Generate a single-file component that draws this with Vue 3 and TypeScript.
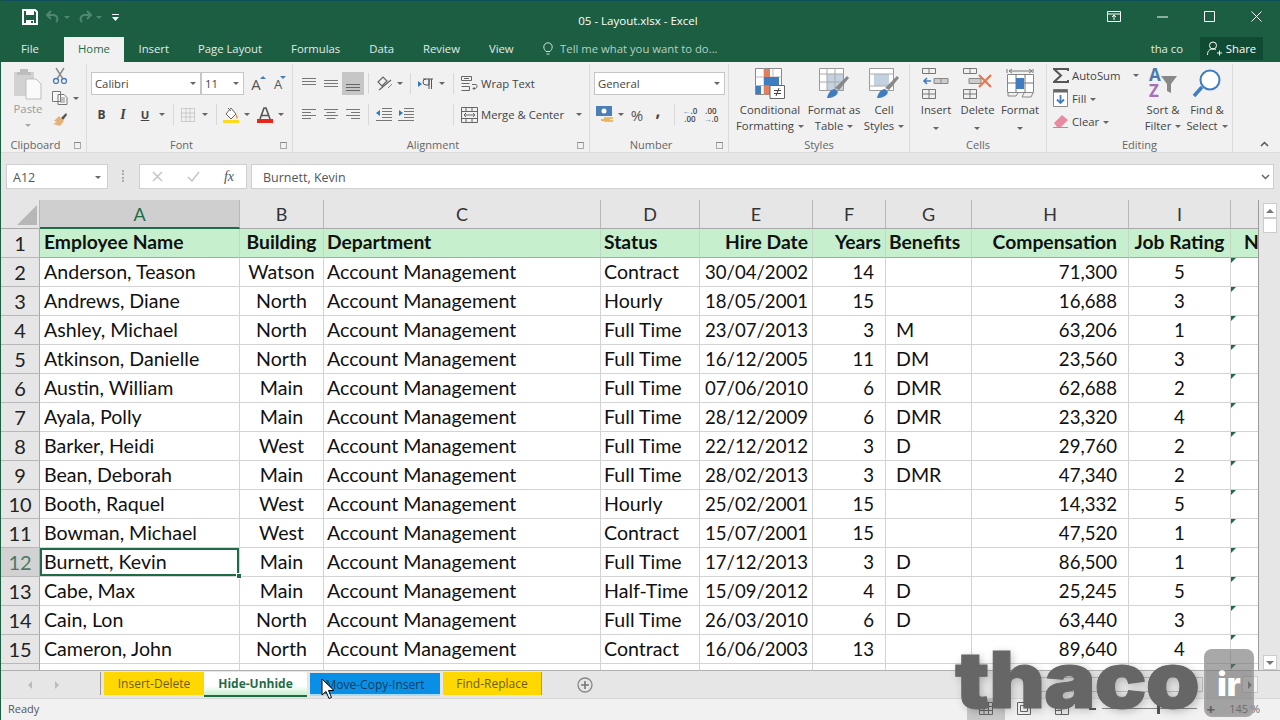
<script setup lang="ts">
// Sheet data, one array per row
type Row = [string, string, string, string, string, string, string, string, string]

const columns = ['A', 'B', 'C', 'D', 'E', 'F', 'G', 'H', 'I', '']
const heads = ['Employee Name', 'Building', 'Department', 'Status', 'Hire Date', 'Years', 'Benefits', 'Compensation', 'Job Rating']
const aligns = ['first', 'center', 'left', 'left', 'right num', 'indent num', 'pad', 'indent num', 'center num']
const headAligns = ['first', 'center', 'left', 'left', 'right', 'right', 'left', 'indent', 'center']

const rows: Row[] = [
  ['Anderson, Teason', 'Watson', 'Account Management', 'Contract', '30/04/2002', '14', '', '71,300', '5'],
  ['Andrews, Diane', 'North', 'Account Management', 'Hourly', '18/05/2001', '15', '', '16,688', '3'],
  ['Ashley, Michael', 'North', 'Account Management', 'Full Time', '23/07/2013', '3', 'M', '63,206', '1'],
  ['Atkinson, Danielle', 'North', 'Account Management', 'Full Time', '16/12/2005', '11', 'DM', '23,560', '3'],
  ['Austin, William', 'Main', 'Account Management', 'Full Time', '07/06/2010', '6', 'DMR', '62,688', '2'],
  ['Ayala, Polly', 'Main', 'Account Management', 'Full Time', '28/12/2009', '6', 'DMR', '23,320', '4'],
  ['Barker, Heidi', 'West', 'Account Management', 'Full Time', '22/12/2012', '3', 'D', '29,760', '2'],
  ['Bean, Deborah', 'Main', 'Account Management', 'Full Time', '28/02/2013', '3', 'DMR', '47,340', '2'],
  ['Booth, Raquel', 'West', 'Account Management', 'Hourly', '25/02/2001', '15', '', '14,332', '5'],
  ['Bowman, Michael', 'West', 'Account Management', 'Contract', '15/07/2001', '15', '', '47,520', '1'],
  ['Burnett, Kevin', 'Main', 'Account Management', 'Full Time', '17/12/2013', '3', 'D', '86,500', '1'],
  ['Cabe, Max', 'Main', 'Account Management', 'Half-Time', '15/09/2012', '4', 'D', '25,245', '5'],
  ['Cain, Lon', 'North', 'Account Management', 'Full Time', '26/03/2010', '6', 'D', '63,440', '3'],
  ['Cameron, John', 'North', 'Account Management', 'Contract', '16/06/2003', '13', '', '89,640', '4'],
]
const menus = ['Insert', 'Page Layout', 'Formulas', 'Data', 'Review', 'View']
</script>

<template>
  <div class="app">
    <!-- Title bar -->
    <header class="title">
      <div class="qat">
        <svg width="16" height="16" viewBox="0 0 16 16"><path d="M1 1h12l2 2v12H1z" fill="none" stroke="#fff" stroke-width="2"/><path d="M4 1h8v5H4zM4 11h8v4H4z" fill="#fff"/><path d="M9 12h2v2H9z" fill="#1b5e42"/></svg>
        <svg class="undo" width="16" height="14" viewBox="0 0 16 14"><path d="M6 1 2 5l4 4M2 5h7a4 4 0 0 1 2 7" fill="none" stroke="#4f8770" stroke-width="2"/></svg>
        <i class="mini" />
        <svg class="undo" width="16" height="14" viewBox="0 0 16 14"><path d="m10 1 4 4-4 4m4-4H7a4 4 0 0 0-2 7" fill="none" stroke="#4f8770" stroke-width="2"/></svg>
        <i class="mini" />
        <svg class="more" width="7" height="7" viewBox="0 0 7 7"><path d="M0 0h7v1H0zM0 3h7L3.500 7z" fill="#fff"/></svg>
      </div>
      <div class="doc">05 - Layout.xlsx - Excel</div>
      <div class="win">
        <svg width="14" height="11" viewBox="0 0 14 11"><path d="M.5.500h13v10H.5zM.5 3h13M7 9V4.500M5 6l2-2 2 2" fill="none" stroke="#fff"/></svg>
        <svg width="11" height="11" viewBox="0 0 11 11"><path d="M0 6h11" stroke="#fff"/></svg>
        <svg width="11" height="11" viewBox="0 0 11 11"><path d="M.5.500h10v10H.5z" fill="none" stroke="#fff"/></svg>
        <svg width="11" height="11" viewBox="0 0 11 11"><path d="m.5.500 10 10m0-10-10 10" fill="none" stroke="#fff"/></svg>
      </div>
    </header>

    <!-- Menu tabs -->
    <nav class="menu">
      <span class="file">File</span>
      <span class="home">Home</span>
      <span v-for="m in menus" :key="m" class="m">{{ m }}</span>
      <svg class="bulb" width="10" height="14" viewBox="0 0 10 14"><path d="M3 9.500C2 8 .8 7 .8 5a4.200 4.200 0 0 1 8.400 0c0 2-1.200 3-2.200 4.500zM3.500 12h3" fill="none" stroke="#cfe0d8"/></svg>
      <span class="tell">Tell me what you want to do...</span>
      <span class="user">tha co</span>
      <span class="share">
        <svg width="15" height="15" viewBox="0 0 15 15"><circle cx="6" cy="4.500" r="3.500" fill="none" stroke="#fff"/><path d="M.5 14c0-4 2-6 5.500-6 1 0 2 .2 2.800.7M10 12h5M12.500 9.500v5" fill="none" stroke="#fff"/></svg>
        Share
      </span>
    </nav>

    <!-- Ribbon -->
    <section class="ribbon">
      <div class="group g-clip">
        <div class="body clip">
          <div class="paste">
            <svg width="30" height="33" viewBox="0 0 30 33"><path d="M1 5h20v24H1z" fill="#d2d2d2"/><path d="M7 5V2h8v3h3v3H4V5z" fill="#bdbdbd"/><path d="M13 12h10l5 5v15H13z" fill="#fafafa" stroke="#bdbdbd"/></svg>
            <span>Paste</span>
            <i class="caret faint" />
          </div>
          <div class="clip-tools">
            <svg width="16" height="17" viewBox="0 0 16 17"><path d="m4 1 7 11m1-11L5 12" stroke="#8b8b8b" stroke-width="1.400" fill="none"/><circle cx="4" cy="14" r="2.500" fill="none" stroke="#4a7ab0" stroke-width="1.300"/><circle cx="12" cy="14" r="2.500" fill="none" stroke="#4a7ab0" stroke-width="1.300"/></svg>
            <div class="row-t">
              <svg width="16" height="14" viewBox="0 0 16 14"><path d="M.5.500h8v10h-8zM6 3.500h6l3 3v7H6z" fill="#f8f8f8" stroke="#777"/><path d="M8 7h5M8 9h5M8 11h5" stroke="#888"/></svg>
              <i class="caret" />
            </div>
            <svg width="16" height="15" viewBox="0 0 16 15"><path d="m9 6 5-5 1 2-4 5z" fill="#555"/><path d="M7 4 12 9 8 14 1 12l4-2-3-1z" fill="#e7b27a"/></svg>
          </div>
        </div>
        <div class="label launched">Clipboard<i class="launch" /></div>
      </div>

      <div class="group g-font">
        <div class="body">
          <div class="bar">
            <div class="combo c-font"><span>Calibri</span><i class="caret" /></div>
            <div class="combo c-size"><span>11</span><i class="caret" /></div>
            <span class="t w24 grow-a">A<b class="up" /></span>
            <span class="t w20 shrink-a">A<b class="dn" /></span>
          </div>
          <div class="bar low">
            <span class="t w21 bold">B</span>
            <span class="t w22 ital">I</span>
            <span class="t w22 under">U</span>
            <span class="t w12"><i class="caret" /></span>
            <span class="t w10"><i class="sep" /></span>
            <span class="t w20"><svg width="14" height="14" viewBox="0 0 14 14"><path d="M.5.500h13v13H.5zM5 .5v13M9 .5v13M.5 5h13M.5 9h13" fill="none" stroke="#aaa" stroke-dasharray="1 1"/></svg></span>
            <span class="t w13"><i class="caret" /></span>
            <span class="t w10"><i class="sep" /></span>
            <span class="t w20"><svg width="16" height="16" viewBox="0 0 16 16"><path d="M8 1 3 7l5 5 5-5zM5 1l3 3" fill="#fff" stroke="#666"/><path d="M13 7c2 2 2 4 1 5-1-1-1-3-1-5z" fill="#e08a3c"/><path d="M0 13h16v3H0z" fill="#fcdb1e"/></svg></span>
            <span class="t w12"><i class="caret" /></span>
            <span class="t w2" />
            <span class="t w20"><svg width="16" height="16" viewBox="0 0 16 16"><path d="m3 12 4-11h2l4 11M4.500 8.500h7" fill="none" stroke="#555" stroke-width="1.600"/><path d="M0 12h16v4H0z" fill="#e8261a"/></svg></span>
            <span class="t w12"><i class="caret" /></span>
          </div>
        </div>
        <div class="label launched">Font<i class="launch" /></div>
      </div>

      <div class="group g-align">
        <div class="body">
          <div class="bar">
            <span class="t w22"><svg width="14" height="18" viewBox="0 0 14 18"><path d="M0 3.500h14M0 6.500h14M0 9.500h14" stroke="#777"/></svg></span>
            <span class="t w22"><svg width="14" height="18" viewBox="0 0 14 18"><path d="M0 5.500h14M0 8.500h14M0 11.500h14" stroke="#777"/></svg></span>
            <span class="t w22 on"><svg width="14" height="18" viewBox="0 0 14 18"><path d="M0 9.500h14M0 12.500h14M0 15.500h14" stroke="#666"/></svg></span>
            <span class="t w8"><i class="sep" /></span>
            <span class="t w24"><svg width="17" height="17" viewBox="0 0 17 17"><path d="m2 7 5-5 4 4-5 5zM3 15 15 5" fill="none" stroke="#666" stroke-width="1.200"/><path d="m12 13 4-4" stroke="#888"/></svg></span>
            <span class="t w8"><i class="caret" /></span>
            <span class="t w12"><i class="sep" /></span>
            <span class="t w20"><svg width="16" height="12" viewBox="0 0 16 12"><path d="M0 3l4 3-4 3z" fill="#2c7bc0"/><path d="M5 1h10M8 1a3 3 0 0 0 0 6h3V1M11 1v10M13.500 1v10" fill="none" stroke="#555"/></svg></span>
            <span class="t w12"><i class="caret" /></span>
            <span class="t w10"><i class="sep" /></span>
            <div class="textbtn">
              <svg width="17" height="17" viewBox="0 0 17 17"><path d="M.5 1.500h10v4H.5zM.5 8.500h8M.5 11.500h8M.5 15.500h8v-4M3 3.500h5M11 9.500h4c1.500 0 1.500 4-1 4h-2m1.500-1.500L12 13.500l1.500 1.500" fill="none" stroke="#666"/></svg>
              <span>Wrap Text</span>
            </div>
          </div>
          <div class="bar low">
            <span class="t w22"><svg width="14" height="12" viewBox="0 0 14 12"><path d="M0 .500h14M0 3.500h9M0 6.500h14M0 9.500h9" stroke="#777"/></svg></span>
            <span class="t w22"><svg width="14" height="12" viewBox="0 0 14 12"><path d="M0 .500h14M2.500 3.500h9M0 6.500h14M2.500 9.500h9" stroke="#777"/></svg></span>
            <span class="t w22"><svg width="14" height="12" viewBox="0 0 14 12"><path d="M0 .500h14M5 3.500h9M0 6.500h14M5 9.500h9" stroke="#777"/></svg></span>
            <span class="t w8"><i class="sep" /></span>
            <span class="t w24"><svg width="16" height="13" viewBox="0 0 16 13"><path d="M6 .500h10M6 3.500h10M6 6.500h10M6 9.500h10M0 12.500h16" stroke="#777"/><path d="M0 5l4-3v6z" fill="#2c7bc0"/></svg></span>
            <span class="t w20"><svg width="16" height="13" viewBox="0 0 16 13"><path d="M6 .500h10M6 3.500h10M6 6.500h10M6 9.500h10M0 12.500h16" stroke="#777"/><path d="M5 5 1 2v6z" fill="#2c7bc0"/></svg></span>
            <span class="t w32" />
            <span class="t w10"><i class="sep" /></span>
            <div class="textbtn">
              <svg width="17" height="16" viewBox="0 0 17 16"><path d="M.5.500h16v15H.5zM.5 4.500h16M.5 11.500h16M5 .5v4M11 .5v4M5 11.500v4M11 11.500v4M3 8h11M5 6 3 8l2 2m7-4 2 2-2 2" fill="none" stroke="#666"/></svg>
              <span>Merge &amp; Center</span>
              <i class="caret merge" />
            </div>
          </div>
        </div>
        <div class="label launched">Alignment<i class="launch" /></div>
      </div>

      <div class="group g-num">
        <div class="body">
          <div class="bar">
            <div class="combo c-num"><span>General</span><i class="caret" /></div>
          </div>
          <div class="bar low">
            <span class="t w22"><svg width="18" height="18" viewBox="0 0 18 18"><path d="M0 0h16v10H0z" fill="#4c7fb5"/><circle cx="8" cy="5" r="2.500" fill="#fff"/><path d="M8 11h9v2H8zM8 14h9v2H8z" fill="#eebd6c"/><path d="M5 13h9v2H5z" fill="#e7b35c"/></svg></span>
            <span class="t w10"><i class="caret" /></span>
            <span class="t w22 pct">%</span>
            <span class="t w20 comma">,</span>
            <span class="t w12"><i class="sep" /></span>
            <span class="t w20 dec"><b><em>←</em>.0</b><b>.00</b></span>
            <span class="t w22 dec"><b>.00</b><b><em>→</em>.0</b></span>
          </div>
        </div>
        <div class="label launched">Number<i class="launch" /></div>
      </div>

      <div class="group g-styles">
        <div class="body large">
          <div class="big w74">
            <svg width="30" height="31" viewBox="0 0 30 31"><path d="M.5.500h26v26H.5z" fill="#fff" stroke="#888"/><path d="M.5 9h26M.5 17.500h26M9 .5v26M18 .5v26" stroke="#bbb"/><path d="M9 1h6v8H9zM9 17.500h6v9H9z" fill="#e08060"/><path d="M9 9h15v8.500H9zM1 18h5v8H1z" fill="#3f7cc0"/><path d="M15 17.500h14.500v13H15z" fill="#fff" stroke="#666"/><path d="M19 22.500h7M19 25.500h7M24 20l-3 8" stroke="#444"/></svg>
            <span>Conditional<br>Formatting<i class="caret inl" /></span>
          </div>
          <div class="big w54">
            <svg width="30" height="31" viewBox="0 0 30 31"><path d="M.5.500h24v22H.5z" fill="#fff" stroke="#999"/><path d="M8 6h16v16H8z" fill="#c3d1e0"/><path d="M.5 6h24M.5 14h24M8 .5v22M16 .5v22" stroke="#aaa"/><path d="m16 20 12-12 2 2-10 12z" fill="#888"/><path d="M8 30c1-5 4-9 8-9l3 3c-1 4-6 6-11 6z" fill="#3f7cc0"/></svg>
            <span>Format as<br>Table<i class="caret inl" /></span>
          </div>
          <div class="big w46">
            <svg width="30" height="31" viewBox="0 0 30 31"><path d="M.5.500h24v22H.5z" fill="#fff" stroke="#999"/><path d="M5 6h15v12H5z" fill="#c3d1e0"/><path d="M.5 6h24M.5 18h24" stroke="#aaa"/><path d="m16 20 12-12 2 2-10 12z" fill="#888"/><path d="M8 30c1-5 4-9 8-9l3 3c-1 4-6 6-11 6z" fill="#3f7cc0"/></svg>
            <span>Cell<br>Styles<i class="caret inl" /></span>
          </div>
        </div>
        <div class="label">Styles</div>
      </div>

      <div class="group g-cells">
        <div class="body large">
          <div class="big w44">
            <svg width="30" height="31" viewBox="0 0 30 31"><path d="M1.500.500h13v5h-13zM8 .5v5M1.500 21.500h13v9h-13zM1.500 26h13M8 21.500v9" fill="none" stroke="#777"/><path d="M13 10.500h14v5H13zM20 10.500v5" fill="#ccc" stroke="#888"/><path d="M10 13H3M6 10l-3 3 3 3" fill="none" stroke="#3f7cc0" stroke-width="1.600"/></svg>
            <span>Insert<br><i class="caret" /></span>
          </div>
          <div class="big w39">
            <svg width="32" height="31" viewBox="0 0 32 31"><path d="M1.500.500h13v5h-13zM8 .5v5M1.500 21.500h13v9h-13zM1.500 26h13M8 21.500v9" fill="none" stroke="#777"/><path d="M7 10.500h12v5H7z" fill="#ccc" stroke="#888"/><path d="m17 7 12 12m0-12L17 19" stroke="#e8764f" stroke-width="2.200"/></svg>
            <span>Delete<br><i class="caret" /></span>
          </div>
          <div class="big w46">
            <svg width="28" height="31" viewBox="0 0 28 31"><path d="M1.500 6.500h26v18h-26z" fill="#fff" stroke="#888"/><path d="M10 6.500v18M19 6.500v18M1.500 15h26M3 3h23M6 1 3 3l3 2m17-4 3 2-3 2" fill="none" stroke="#777"/><path d="M1 1v4M27 1v4" stroke="#777"/><path d="M10 10h8v11h-8z" fill="#3f7cc0"/><path d="M2 25v3h8l2-3M18 25l-2 4h9l2-4" fill="none" stroke="#888"/></svg>
            <span>Format<br><i class="caret" /></span>
          </div>
        </div>
        <div class="label">Cells</div>
      </div>

      <div class="group g-edit">
        <div class="body large">
          <div class="stack">
            <div class="line">
              <svg width="16" height="15" viewBox="0 0 16 15"><path d="M15 3V1H1l7 6.500L1 14h14v-2" fill="none" stroke="#555" stroke-width="2"/></svg>
              <span>AutoSum</span>
              <i class="caret sum" />
            </div>
            <div class="line">
              <svg width="16" height="18" viewBox="0 0 16 18"><path d="M.5.500h14v17H.5z" fill="#fff" stroke="#888"/><path d="M.5.500h14v3H.5z" fill="#666"/><path d="M7.500 6v8M4 10.500l3.500 3.500 3.500-3.500" fill="none" stroke="#3f7cc0" stroke-width="1.800"/></svg>
              <span>Fill<i class="caret inl" /></span>
            </div>
            <div class="line">
              <svg width="16" height="14" viewBox="0 0 16 14"><path d="M1 9 9 1l6 5-7 7H4z" fill="#e98aa0"/><path d="M0 13.500h15" stroke="#999"/></svg>
              <span>Clear<i class="caret inl" /></span>
            </div>
          </div>
          <div class="big w44">
            <svg width="30" height="31" viewBox="0 0 30 31"><text x="1" y="13" class="az a">A</text><text x="1" y="29" class="az z">Z</text><path d="M13 8h16l-6 8v9l-4-2v-7z" fill="#888"/></svg>
            <span>Sort &amp;<br>Filter<i class="caret inl" /></span>
          </div>
          <div class="big w44">
            <svg width="30" height="31" viewBox="0 0 30 31"><circle cx="18" cy="12" r="9.500" fill="#fff" stroke="#3f7cc0" stroke-width="2"/><path d="m10 19-8 9" stroke="#3f7cc0" stroke-width="3.500"/></svg>
            <span>Find &amp;<br>Select<i class="caret inl" /></span>
          </div>
        </div>
        <div class="label">Editing</div>
      </div>

      <svg class="collapse" width="9" height="6" viewBox="0 0 9 6"><path d="m1 5 3.500-3.500L8 5" fill="none" stroke="#555" stroke-width="1.500"/></svg>
    </section>

    <!-- Formula bar -->
    <section class="formula">
      <div class="name"><span>A12</span><i class="caret" /></div>
      <div class="grip" />
      <div class="fx-box">
        <svg width="11" height="11" viewBox="0 0 11 11"><path d="m1 1 9 9m0-9-9 9" stroke="#c5c5c5" stroke-width="1.500"/></svg>
        <svg width="13" height="11" viewBox="0 0 13 11"><path d="m1 6 4 4 7-9" fill="none" stroke="#c5c5c5" stroke-width="1.500"/></svg>
        <i class="fx">fx</i>
      </div>
      <div class="input"><span>Burnett, Kevin</span>
        <svg width="9" height="6" viewBox="0 0 9 6"><path d="m1 1 3.500 3.500L8 1" fill="none" stroke="#666" stroke-width="1.500"/></svg>
      </div>
    </section>

    <!-- Sheet -->
    <section class="sheet">
      <div class="grid">
        <div class="ch corner"><i /></div>
        <div v-for="(c, i) in columns" :key="c + i" class="ch" :class="{ sel: i === 0 }">{{ c }}</div>

        <div class="rh">1</div>
        <div v-for="(h, i) in heads" :key="h" class="cell head" :class="'a-' + headAligns[i]">{{ h }}</div>
        <div class="cell head n">N</div>

        <template v-for="(r, ri) in rows" :key="ri">
          <div class="rh" :class="{ sel: ri === 10 }">{{ ri + 2 }}</div>
          <div v-for="(v, i) in r" :key="i" class="cell" :class="[aligns[i].split(' ').map((a) => 'a-' + a), { current: ri === 10 && i === 0 }]">{{ v }}</div>
          <div class="cell flag"><i /></div>
        </template>

        <div class="rh" />
        <div v-for="n in 9" :key="n" class="cell" />
        <div class="cell flag"><i /></div>
      </div>
      <aside class="vscroll">
        <button class="sb"><i class="tri-up" /></button>
        <div class="thumb" />
        <div class="track" />
        <button class="sb"><i class="tri-dn" /></button>
      </aside>
    </section>

    <!-- Sheet tabs -->
    <section class="tabs">
      <div class="nav"><i class="arr l" /><i class="arr r" /></div>
      <div class="tab yellow first">Insert-Delete</div>
      <div class="tab now">Hide-Unhide</div>
      <div class="tab blue">Move-Copy-Insert</div>
      <div class="tab yellow last">Find-Replace</div>
      <svg class="plus" width="16" height="16" viewBox="0 0 16 16"><circle cx="8" cy="8" r="7" fill="none" stroke="#888" stroke-width="1.300"/><path d="M4 8h8M8 4v8" stroke="#777" stroke-width="1.600"/></svg>
      <div class="hbar" />
      <div class="hscroll"><i class="arr r" /></div>
    </section>

    <!-- Status bar -->
    <footer class="status">
      <span>Ready</span>
      <div class="views">
        <span class="view picked"><svg width="14" height="13" viewBox="0 0 14 13"><path d="M.5.500h13v12H.5zM5 .5v12M9.500.5v12M.5 4.500h13M.5 8.500h13" fill="none" stroke="#666"/></svg></span>
        <span class="view"><svg width="14" height="13" viewBox="0 0 14 13"><path d="M.5.500h13v12H.5zM3.500 3.500h7v6h-7z" fill="none" stroke="#666"/></svg></span>
        <span class="view"><svg width="14" height="13" viewBox="0 0 14 13"><path d="M.5.500h13v12H.5zM.5 8.500h6v4M6.500 .5v8" fill="none" stroke="#666"/></svg></span>
        <i class="minus" />
        <i class="zoomline"><u /></i>
        <b>+</b>
        <span class="pc">145 %</span>
      </div>
    </footer>

    <!-- Watermark and pointer lie over the window -->
    <div class="mark">thaco</div>
    <div class="mark-box">ir</div>
    <svg class="pointer" width="14" height="22" viewBox="0 0 14 22"><path d="M1 1v16l4-3.500 3 7 2.500-1-3-7H13z" fill="#fff" stroke="#000"/></svg>
  </div>
</template>

<style>
html, body { margin: 0; background: #fff; }
</style>

<style scoped>
.app {
  position: relative;
  width: 1280px;
  height: 720px;
  overflow: hidden;
  display: flex;
  flex-direction: column;
  font-family: "Open Sans", "Noto Sans", sans-serif;
  color: #444;
  font-size: 11.300px;
  background: #f1f1f1;
  border-left: 1px solid #1b5e42;
  box-sizing: border-box;
}
.app i, .app em { font-style: normal; }
.title {
  height: 37px;
  flex: none;
  display: flex;
  align-items: center;
  background: #1b5e42;
  border-top: 1px solid #0f4f5c;
  color: #fff;
  margin-left: -1px;
  box-sizing: border-box;
}
.qat { width: 200px; display: flex; align-items: center; padding-left: 22px; margin-top: -4px; box-sizing: content-box; }
.qat .undo { margin-left: 7px; }
.qat .more { margin-left: 10px; }
.mini { width: 0; height: 0; margin-left: 3px; border: 3px solid transparent; border-top: 3px solid #4f8770; border-bottom: 0; }
.doc { flex: 1; text-align: center; padding-left: 142px; padding-top: 3px; font-size: 11.500px; box-sizing: border-box; }
.win { width: 350px; display: flex; justify-content: flex-end; align-items: center; gap: 36px; padding-right: 18px; margin-top: -6px; }

.menu {
  height: 25px;
  flex: none;
  display: flex;
  align-items: center;
  background: #1b5e42;
  color: #e3ebe7;
  margin-left: -1px;
  font-size: 11.300px;
}
.file { width: 64px; padding-left: 21px; box-sizing: border-box; margin-top: -2px; }
.home {
  width: 60px;
  height: 100%;
  background: #f1f1f1;
  color: #1e6e47;
  display: flex;
  align-items: center;
  justify-content: center;
  padding-bottom: 2px;
  box-sizing: border-box;
}
.m { padding: 0 14.500px; margin-top: -2px; }
.bulb { margin-left: 15px; margin-top: -2px; }
.tell { margin-left: 7px; color: #b7d0c4; margin-top: -2px; }
.user { margin-left: auto; margin-right: 17px; margin-top: -2px; }
.share {
  width: 63px;
  height: 23px;
  margin-right: 17px;
  margin-top: -2px;
  background: #104a32;
  display: flex;
  align-items: center;
  justify-content: center;
  gap: 4px;
  color: #fff;
}

.ribbon {
  height: 91px;
  flex: none;
  display: flex;
  position: relative;
  background: #f1f1f1;
  border-bottom: 1px solid #dcdcdc;
  box-sizing: border-box;
}
.group {
  display: flex;
  flex-direction: column;
  border-right: 1px solid #dcdcdc;
  height: 88px;
  margin-top: 2px;
  box-sizing: border-box;
}
.g-clip { width: 86px; }
.g-font { width: 206px; }
.g-align { width: 297px; }
.g-num { width: 139px; }
.g-styles { width: 181px; }
.g-cells { width: 137px; }
.g-edit { width: 186px; }
.g-font .body, .g-num .body, .g-styles .body, .g-cells .body { padding-left: 4px; }
.g-align .body { padding-left: 5px; }
.g-edit .body { padding-left: 3px; }
.body { flex: 1; padding-top: 8px; box-sizing: border-box; }
.label {
  height: 14px;
  line-height: 14px;
  text-align: center;
  position: relative;
  color: #666;
  font-size: 11px;
}
.label.launched { padding-right: 16px; }
.launch {
  position: absolute;
  right: 5px;
  top: 4px;
  width: 7px;
  height: 7px;
  border: 1px solid #aaa;
  border-top-color: #888;
  box-sizing: border-box;
}
.bar { height: 23px; display: flex; align-items: center; }
.bar.low { margin-top: 8px; }
.t { flex: none; display: flex; align-items: center; justify-content: center; height: 23px; }
.w2 { width: 2px; }
.w8 { width: 8px; }
.w10 { width: 10px; }
.w12 { width: 12px; }
.w13 { width: 13px; }
.w20 { width: 20px; }
.w21 { width: 21px; }
.w22 { width: 22px; }
.w24 { width: 24px; }
.w32 { width: 32px; }
.on { background: #c6c6c6; }
.sep { width: 1px; height: 21px; background: #d8d8d8; }
.caret {
  display: inline-block;
  width: 0;
  height: 0;
  border: 3px solid transparent;
  border-top: 3px solid #666;
  border-bottom: 0;
}
.caret.faint { border-top-color: #aaa; }
.caret.inl { margin-left: 4px; vertical-align: 2px; }
.caret.merge { margin-left: 9px; }
.caret.sum { margin-left: 10px; }
.combo {
  height: 23px;
  background: #fff;
  border: 1px solid #c6c6c6;
  box-sizing: border-box;
  display: flex;
  align-items: center;
  justify-content: space-between;
  padding: 0 4px 0 3px;
}
.c-font { width: 110px; }
.c-size { width: 43px; margin-left: 0; }
.c-num { width: 131px; }
.grow-a, .shrink-a { position: relative; font-size: 15px; color: #555; }
.shrink-a { font-size: 13px; }
.up, .dn { position: absolute; right: 2px; top: 4px; width: 0; height: 0; border: 3px solid transparent; }
.up { border-bottom: 3px solid #4a7ab0; border-top: 0; }
.dn { border-top: 3px solid #4a7ab0; border-bottom: 0; }
.bold { font-weight: 700; font-size: 12px; color: #444; }
.ital { font-style: italic; font-family: "Liberation Serif", serif; font-size: 14px; font-weight: 700; }
.under { font-weight: 700; text-decoration: underline; }
.textbtn { display: flex; align-items: center; margin-left: 3px; gap: 3px; color: #444; }
.pct { font-size: 15px; color: #555; }
.comma { font-size: 17px; font-weight: 700; padding-bottom: 8px; box-sizing: border-box; }
.dec { flex-direction: column; font-size: 8px; line-height: 8px; font-weight: 600; }
.dec b { font-weight: 600; }
.dec em { color: #3f7cc0; }

.clip { display: flex; padding-top: 3px; }
.paste {
  width: 52px;
  display: flex;
  flex-direction: column;
  align-items: center;
  color: #9b9b9b;
  padding-left: 2px;
  box-sizing: border-box;
}
.paste span { margin-top: 1px; }
.paste .caret { margin-top: 8px; }
.clip-tools { display: flex; flex-direction: column; align-items: flex-start; gap: 7px; margin-left: -1px; }
.row-t { display: flex; align-items: center; gap: 5px; }

.large { display: flex; padding-top: 4px; }
.big {
  flex: none;
  display: flex;
  flex-direction: column;
  align-items: center;
  text-align: center;
  line-height: 16px;
  color: #444;
  white-space: nowrap;
}
.big svg { height: 31px; margin-bottom: 3px; }
.w39 { width: 39px; }
.w44 { width: 44px; }
.w46 { width: 46px; }
.w54 { width: 54px; }
.w74 { width: 74px; }
.stack { width: 91px; display: flex; flex-direction: column; gap: 5px; padding-left: 3px; margin-top: -2px; box-sizing: border-box; }
.line { display: flex; align-items: center; gap: 3px; height: 18px; }
.az { font-size: 17px; font-weight: 700; font-family: "Open Sans", sans-serif; }
.az.a { fill: #4a7ab0; }
.az.z { fill: #a76fb8; }
.collapse { position: absolute; right: 11px; bottom: 5px; }

.formula {
  height: 47px;
  flex: none;
  display: flex;
  align-items: flex-start;
  padding: 11px 6px 0 5px;
  box-sizing: border-box;
  background: #e6e6e6;
  font-size: 12.500px;
  color: #555;
}
.name {
  width: 102px;
  height: 25px;
  background: #fff;
  border: 1px solid #d0d0d0;
  box-sizing: border-box;
  display: flex;
  align-items: center;
  justify-content: space-between;
  padding: 1px 6px 0;
}
.grip { width: 2px; height: 12px; margin: 6px 15px 0 14px; border-left: 2px dotted #aaa; box-sizing: border-box; }
.fx-box {
  width: 108px;
  height: 25px;
  background: #fff;
  border: 1px solid #d0d0d0;
  box-sizing: border-box;
  display: flex;
  align-items: center;
  justify-content: space-between;
  padding: 0 12px;
}
.fx { font-family: "Liberation Serif", serif; font-style: italic !important; font-size: 14px; color: #555; }
.input {
  flex: 1;
  height: 25px;
  margin-left: 4px;
  background: #fff;
  border: 1px solid #d0d0d0;
  box-sizing: border-box;
  display: flex;
  align-items: center;
  justify-content: space-between;
  padding: 1px 3px 0 11px;
}

.sheet { flex: 1; min-height: 0; display: flex; background: #e6e6e6; }
.grid {
  width: 1257px;
  height: 470px;
  overflow: hidden;
  display: grid;
  grid-template-columns: 39px 200px 84px 277px 99px 113px 73px 86px 157px 102px 27px;
  grid-auto-rows: 29px;
  font-family: Lato, "Open Sans", sans-serif;
  font-size: 19.600px;
  color: #111;
  background: #fff;
  border-right: 1px solid #9b9b9b;
  box-sizing: content-box;
}
.ch {
  background: #e6e6e6;
  border-right: 1px solid #b8b8b8;
  border-bottom: 1px solid #a8a8a8;
  display: flex;
  align-items: center;
  justify-content: center;
  color: #333;
  font-size: 18px;
  box-sizing: border-box;
}
.ch:nth-child(11) { border-right: 0; }
.ch.sel { background: #cfcfcf; color: #1f6b45; border-bottom: 2px solid #1f6b45; }
.corner { justify-content: flex-end; align-items: flex-end; padding: 0 2px 3px 0; }
.corner i { width: 0; height: 0; border-left: 20px solid transparent; border-bottom: 20px solid #b7b7b7; }
.rh {
  background: #e6e6e6;
  border-right: 1px solid #a8a8a8;
  border-bottom: 1px solid #b8b8b8;
  display: flex;
  align-items: center;
  justify-content: center;
  font-size: 20px;
  color: #222;
  box-sizing: border-box;
}
.rh.sel { background: #d2d2d2; color: #4a7a66; }
.cell {
  border-right: 1px solid #d4d4d4;
  border-bottom: 1px solid #d4d4d4;
  padding: 0 3px;
  box-sizing: border-box;
  white-space: nowrap;
  overflow: hidden;
  line-height: 28px;
}
.cell.head { background: #c6efce; font-weight: 700; font-size: 19.300px; color: #111; line-height: 26px; border-color: #c0d8c4; border-bottom-color: #a8a8a8; }
.cell.n { padding-left: 13px; border-right: 0; }
.a-first { text-align: left; padding-left: 4px; }
.a-left { text-align: left; }
.a-center { text-align: center; }
.a-right { text-align: right; padding-right: 4px; }
.a-indent { text-align: right; padding-right: 11px; }
.a-pad { text-align: left; padding-left: 10px; }
.a-num { font-size: 18.600px; }
.cell.current { box-shadow: inset 0 0 0 2px #1f6b45; overflow: visible; position: relative; }
.cell.current::after {
  content: "";
  position: absolute;
  right: -3px;
  bottom: -3px;
  width: 6px;
  height: 6px;
  background: #1f6b45;
  border: 1px solid #fff;
  box-sizing: border-box;
}
.flag { padding: 0; border-right: 0; position: relative; }
.flag i { display: block; width: 0; height: 0; border-top: 5px solid #1f6b45; border-right: 5px solid transparent; }

.vscroll { flex: 1; display: flex; flex-direction: column; align-items: center; padding-top: 3px; }
.sb { width: 14px; height: 15px; padding: 0; background: #fff; border: 1px solid #ccc; display: flex; align-items: center; justify-content: center; }
.thumb { width: 14px; height: 15px; background: #fff; border: 1px solid #ccc; box-sizing: border-box; }
.track { flex: 1; }
.tri-up, .tri-dn { width: 0; height: 0; border: 4px solid transparent; }
.tri-up { border-bottom: 4px solid #777; border-top: 0; }
.tri-dn { border-top: 4px solid #777; border-bottom: 0; }

.tabs {
  height: 28px;
  flex: none;
  display: flex;
  align-items: center;
  background: #e6e6e6;
  border-top: 1px solid #b0b0b0;
  box-sizing: border-box;
  font-size: 12px;
}
.nav { width: 100px; display: flex; gap: 23px; padding-left: 27px; box-sizing: border-box; }
.arr { width: 0; height: 0; border: 4px solid transparent; }
.arr.l { border-right: 4px solid #bbb; border-left: 0; }
.arr.r { border-left: 4px solid #bbb; border-right: 0; }
.tab { height: 23px; line-height: 24px; text-align: center; margin-top: -2px; color: #444; box-sizing: border-box; }
.yellow { background: #ffd800; color: #6b5b1a; }
.first { width: 103px; border-left: 3px solid #e6e6e6; box-shadow: -1px 0 0 #999; }
.now {
  width: 103px;
  height: 25px;
  margin-top: -1px;
  background: linear-gradient(#fff 60%, #c6efce);
  color: #1f6b45;
  font-weight: 700;
  border-bottom: 2px solid #1f6b45;
}
.blue { width: 130px; margin: 0 3px 0 3px; background: #0a8fe6; color: #123c5c; border-bottom: 2px solid #a8dcf8; }
.last { width: 98px; box-shadow: 1px 0 0 #999; }
.plus { margin-left: 36px; }
.hbar { margin-left: auto; width: 170px; height: 15px; border: 1px solid #bbb; box-sizing: border-box; }
.hscroll { margin: 0 22px 0 39px; display: flex; align-items: center; justify-content: center; width: 14px; height: 15px; background: #f4f4f4; border: 1px solid #ccc; }
.hscroll .arr.r { border-left-color: #777; }

.status {
  height: 22px;
  flex: none;
  display: flex;
  align-items: center;
  justify-content: space-between;
  padding: 0 20px 2px 7px;
  background: #f1f1f1;
  font-size: 11px;
  border-top: 1px solid #d8d8d8;
  box-sizing: border-box;
  color: #555;
}
.views { display: flex; align-items: center; gap: 24px; height: 100%; }
.view { display: flex; align-items: center; width: 14px; }
.picked { width: 38px; margin: 0 -12px; height: 22px; justify-content: center; background: #c8c8c8; }
.minus { width: 7px; height: 2px; background: #555; margin-left: -4px; }
.zoomline { width: 95px; height: 1px; background: #888; position: relative; margin-left: -18px; }
.zoomline u { position: absolute; left: 55px; top: -6px; width: 3px; height: 12px; background: #555; }
.views b { font-size: 15px; font-weight: 700; margin-left: -14px; color: #444; }
.pc { margin-left: -10px; color: #666; }

.mark {
  position: absolute;
  left: 954px;
  top: 635px;
  font-family: Inter, "Liberation Sans", sans-serif;
  font-weight: 900;
  font-size: 78px;
  line-height: 90px;
  letter-spacing: -1px;
  color: #666;
  transform: scaleX(1.11);
  transform-origin: left center;
  -webkit-text-stroke: 1px #666;
  text-shadow: 2px 2px 8px rgba(0, 0, 0, .25);
}
.mark-box {
  position: absolute;
  left: 1203px;
  top: 649px;
  width: 50px;
  height: 68px;
  border-radius: 8px;
  background: rgba(110, 110, 110, .6);
  border: 2px solid rgba(170, 170, 170, .7);
  box-sizing: border-box;
  color: #fff;
  font: 900 32px/68px Inter, "Liberation Sans", sans-serif;
  text-align: center;
}
.pointer { position: absolute; left: 320px; top: 678px; }
</style>
